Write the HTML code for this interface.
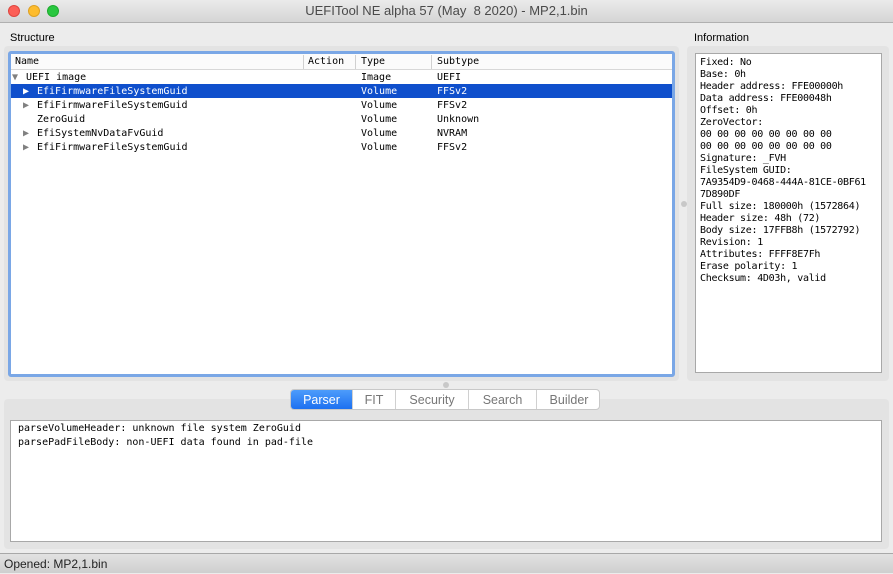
<!DOCTYPE html>
<html><head><meta charset="utf-8"><style>
*{margin:0;padding:0;box-sizing:border-box}
body{width:893px;height:573px;background:#ececec;position:relative;overflow:hidden;font-family:"Liberation Sans",sans-serif;font-size:11px;color:#000}
.a{position:absolute}
.mono{font-family:"DejaVu Sans Mono","Liberation Mono",monospace;font-size:10px}
.info{letter-spacing:-0.3px}
.title{left:0;top:0;width:893px;height:23px;background:linear-gradient(#ebebeb,#d5d5d5);border-bottom:1px solid #b0b0b0;text-align:center;line-height:22px;font-size:13px;color:#4a4a4a}
.dot{top:5px;width:12px;height:12px;border-radius:50%}
.grp{background:#e3e3e3;border-radius:4px}
.row{position:absolute;left:0;width:100%;height:14px;line-height:14px}
.row span{position:absolute}
.tri{color:#808080;font-size:10px}
.tab{position:absolute;top:0;height:20px;line-height:20px;text-align:center;font-size:12.5px;color:#777;border-left:1px solid #d0d0d0}
</style></head><body>
<div class="a title">UEFITool NE alpha 57 (May&nbsp; 8 2020) - MP2,1.bin</div>
<div class="a dot" style="left:8px;background:#fc5f57;border:1px solid #de4640"></div>
<div class="a dot" style="left:28px;background:#fdbc2e;border:1px solid #dea123"></div>
<div class="a dot" style="left:47px;background:#29c740;border:1px solid #1eab2e"></div>

<div class="a" style="left:10px;top:32px;font-size:11px">Structure</div>
<div class="a grp" style="left:4px;top:46px;width:675px;height:335px"></div>
<div class="a" style="left:8px;top:51px;width:667px;height:326px;border:3px solid #7aa7e6;border-radius:3px;background:#fff"></div>
<div class="a mono" style="left:11px;top:54px;width:661px;height:320px;background:#fff">
 <div class="a" style="left:0;top:0;width:661px;height:16px;border-bottom:1px solid #d8d8d8;background:#fbfbfb"></div>
 <div class="a" style="left:4px;top:2px">Name</div>
 <div class="a" style="left:292px;top:1px;width:1px;height:14px;background:#d0d0d0"></div>
 <div class="a" style="left:297px;top:2px">Action</div>
 <div class="a" style="left:344px;top:1px;width:1px;height:14px;background:#d0d0d0"></div>
 <div class="a" style="left:350px;top:2px">Type</div>
 <div class="a" style="left:420px;top:1px;width:1px;height:14px;background:#d0d0d0"></div>
 <div class="a" style="left:426px;top:2px">Subtype</div>
 <div class="row" style="top:17px"><span class="tri" style="left:1px">▼</span><span style="left:15px">UEFI image</span><span style="left:350px">Image</span><span style="left:426px">UEFI</span></div>
 <div class="row" style="top:30px;background:#0f4fcc;color:#fff"></div>
 <div class="row" style="top:31px;color:#fff"><span style="left:12px">▶</span><span style="left:26px">EfiFirmwareFileSystemGuid</span><span style="left:350px">Volume</span><span style="left:426px">FFSv2</span></div>
 <div class="row" style="top:45px"><span class="tri" style="left:12px">▶</span><span style="left:26px">EfiFirmwareFileSystemGuid</span><span style="left:350px">Volume</span><span style="left:426px">FFSv2</span></div>
 <div class="row" style="top:59px"><span style="left:26px">ZeroGuid</span><span style="left:350px">Volume</span><span style="left:426px">Unknown</span></div>
 <div class="row" style="top:73px"><span class="tri" style="left:12px">▶</span><span style="left:26px">EfiSystemNvDataFvGuid</span><span style="left:350px">Volume</span><span style="left:426px">NVRAM</span></div>
 <div class="row" style="top:87px"><span class="tri" style="left:12px">▶</span><span style="left:26px">EfiFirmwareFileSystemGuid</span><span style="left:350px">Volume</span><span style="left:426px">FFSv2</span></div>
</div>

<div class="a" style="left:681px;top:201px;width:6px;height:6px;border-radius:50%;background:#c8c8c8"></div>
<div class="a" style="left:443px;top:382px;width:6px;height:6px;border-radius:50%;background:#c8c8c8"></div>

<div class="a" style="left:694px;top:32px">Information</div>
<div class="a grp" style="left:687px;top:46px;width:202px;height:335px"></div>
<div class="a mono info" style="left:695px;top:53px;width:187px;height:320px;background:#fff;border:1px solid #a8a8a8;padding:3px 4px;line-height:12px;white-space:pre">Fixed: No
Base: 0h
Header address: FFE00000h
Data address: FFE00048h
Offset: 0h
ZeroVector:
00 00 00 00 00 00 00 00
00 00 00 00 00 00 00 00
Signature: _FVH
FileSystem GUID:
7A9354D9-0468-444A-81CE-0BF61
7D890DF
Full size: 180000h (1572864)
Header size: 48h (72)
Body size: 17FFB8h (1572792)
Revision: 1
Attributes: FFFF8E7Fh
Erase polarity: 1
Checksum: 4D03h, valid</div>

<div class="a grp" style="left:4px;top:399px;width:885px;height:150px"></div>
<div class="a" style="left:290px;top:389px;width:310px;height:21px;background:#fff;border:1px solid #c8c8c8;border-radius:4px;overflow:hidden">
 <div class="tab" style="left:0;width:61px;border:none;background:linear-gradient(#4d9cfb,#1a6ef0);color:#fff">Parser</div>
 <div class="tab" style="left:61px;width:43px">FIT</div>
 <div class="tab" style="left:104px;width:73px">Security</div>
 <div class="tab" style="left:177px;width:68px">Search</div>
 <div class="tab" style="left:245px;width:65px">Builder</div>
</div>
<div class="a mono" style="left:10px;top:420px;width:872px;height:122px;background:#fff;border:1px solid #a8a8a8;padding:1px 7px;line-height:14px;white-space:pre">parseVolumeHeader: unknown file system ZeroGuid
parsePadFileBody: non-UEFI data found in pad-file</div>

<div class="a" style="left:0;top:553px;width:893px;height:20px;background:linear-gradient(#e2e2e2,#cfcfcf);border-top:1px solid #a8a8a8;line-height:20px;padding-left:4px;font-size:12px;color:#222">Opened: MP2,1.bin</div>
</body></html>
